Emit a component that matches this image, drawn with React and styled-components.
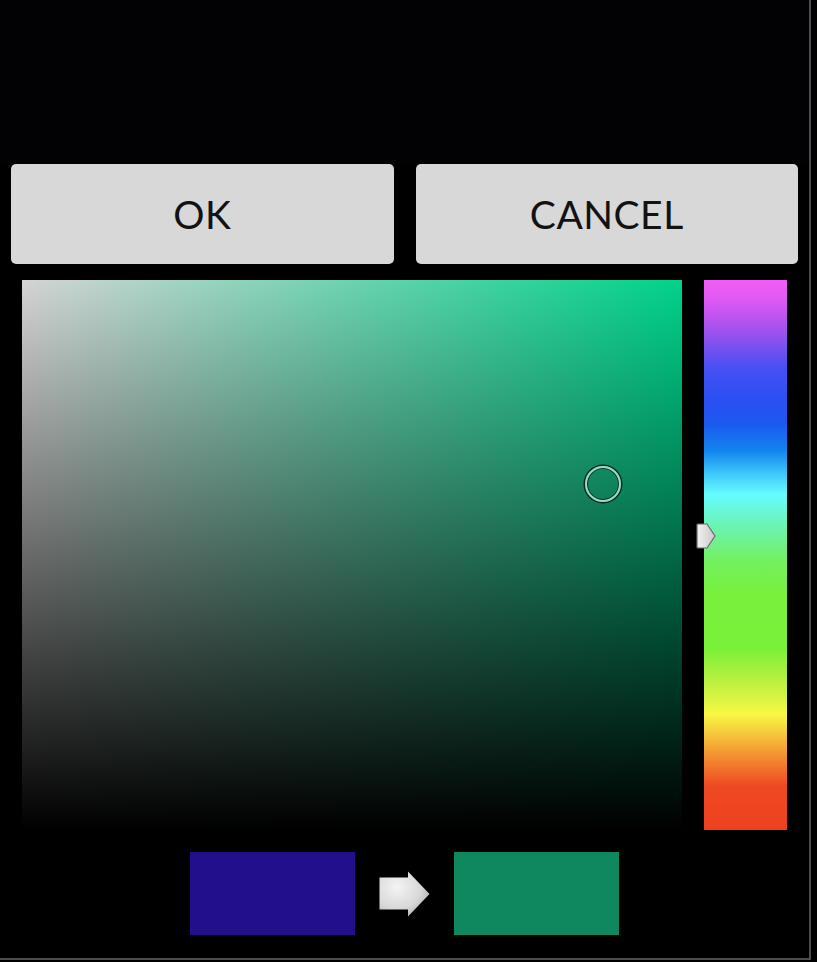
import styled, { createGlobalStyle } from "styled-components";

const Global = createGlobalStyle`
  html, body {
    margin: 0;
    padding: 0;
    background: #000;
  }
  body {
    font-family: Lato, "Open Sans", sans-serif;
  }
`;

const Frame = styled.div`
  width: 809px;
  height: 958px;
  background: #000;
  border-right: 2px solid #4d4d4d;
  border-bottom: 2px solid #4d4d4d;
  display: flex;
  flex-direction: column;
`;

const Header = styled.div`
  height: 164px;
  background: #020204;
`;

const ButtonRow = styled.div`
  display: grid;
  grid-template-columns: 1fr 1fr;
  gap: 22px;
  padding: 0 11px;
`;

const Button = styled.button`
  height: 100px;
  border: none;
  border-radius: 5px;
  background: #d7d8d7;
  color: #121212;
  font-family: Lato, "Open Sans", sans-serif;
  font-size: 39px;
  font-weight: 400;
  letter-spacing: 0.5px;
  padding: 0;
  cursor: pointer;
`;

const PickerRow = styled.div`
  display: flex;
  gap: 22px;
  padding: 16px 22px 0 22px;
`;

const SVSquare = styled.div`
  position: relative;
  width: 660px;
  height: 550px;
  background:
    linear-gradient(to bottom, rgba(0, 0, 0, 0) 0%, rgba(0, 0, 0, 0.5) 50%, #000 100%),
    linear-gradient(to right, #d4d4d4 0%, rgba(212, 212, 212, 0) 100%),
    #00d28c;
`;

const Handle = styled.div`
  position: absolute;
  width: 32px;
  height: 32px;
  border-radius: 50%;
  border: 2px solid #9fd8c2;
  box-shadow: 0 0 0 1.5px #0b2a20, inset 0 0 0 1px #0b3a2a;
  transform: translate(-50%, -50%);
`;

const HueBar = styled.div`
  position: relative;
  width: 83px;
  height: 550px;
  background: linear-gradient(
    to bottom,
    #f25cf6 0%,
    #e45af4 3%,
    #a452ee 9%,
    #4650f2 16%,
    #2a50f2 22%,
    #1c58f0 26%,
    #1284ee 31%,
    #3cc4f8 35%,
    #66fcff 39%,
    #6cf3b0 45%,
    #74f060 51%,
    #78f03c 57%,
    #7af03a 67%,
    #bcf040 73%,
    #f8f844 79%,
    #f6c03a 83%,
    #f28a30 87%,
    #ee4a22 92%,
    #ee4020 100%
  );
`;

const HueMarker = styled.svg`
  position: absolute;
  left: -8px;
  transform: translateY(-50%);
`;

const SwatchRow = styled.div`
  display: flex;
  justify-content: center;
  align-items: center;
  gap: 24px;
  margin-top: 22px;
`;

const Swatch = styled.div`
  width: 165px;
  height: 83px;
  background: ${(p) => p.$color};
`;

const Arrow = () => (
  <svg width="51" height="46" viewBox="0 0 51 46">
    <defs>
      <radialGradient id="arrowFill" cx="0.35" cy="0.35" r="0.8">
        <stop offset="0" stopColor="#f4f4f4" />
        <stop offset="0.6" stopColor="#d8d8d8" />
        <stop offset="1" stopColor="#a8a8a8" />
      </radialGradient>
    </defs>
    <path d="M0.5 6.5 H29 V0.5 L50.5 23 L29 45.5 V38.5 H0.5 Z" fill="url(#arrowFill)" />
  </svg>
);

export default function App() {
  return (
    <>
      <Global />
      <Frame>
        <Header />
        <ButtonRow>
          <Button>OK</Button>
          <Button>CANCEL</Button>
        </ButtonRow>
        <PickerRow>
          <SVSquare>
            <Handle style={{ left: 581, top: 204 }} />
          </SVSquare>
          <HueBar>
            <HueMarker width="20" height="26" viewBox="0 0 20 26" style={{ top: 256 }}>
              <defs>
                <linearGradient id="markerFill" x1="0" y1="0" x2="1" y2="0">
                  <stop offset="0" stopColor="#f2f2f2" />
                  <stop offset="1" stopColor="#c8c8c8" />
                </linearGradient>
              </defs>
              <path
                d="M1 2 Q1 1 2 1 H11 L19 13 L11 25 H2 Q1 25 1 24 Z"
                fill="url(#markerFill)"
                stroke="#6a6a6a"
                strokeWidth="1.2"
              />
            </HueMarker>
          </HueBar>
        </PickerRow>
        <SwatchRow>
          <Swatch $color="#22108a" />
          <Arrow />
          <Swatch $color="#10885f" />
        </SwatchRow>
      </Frame>
    </>
  );
}
